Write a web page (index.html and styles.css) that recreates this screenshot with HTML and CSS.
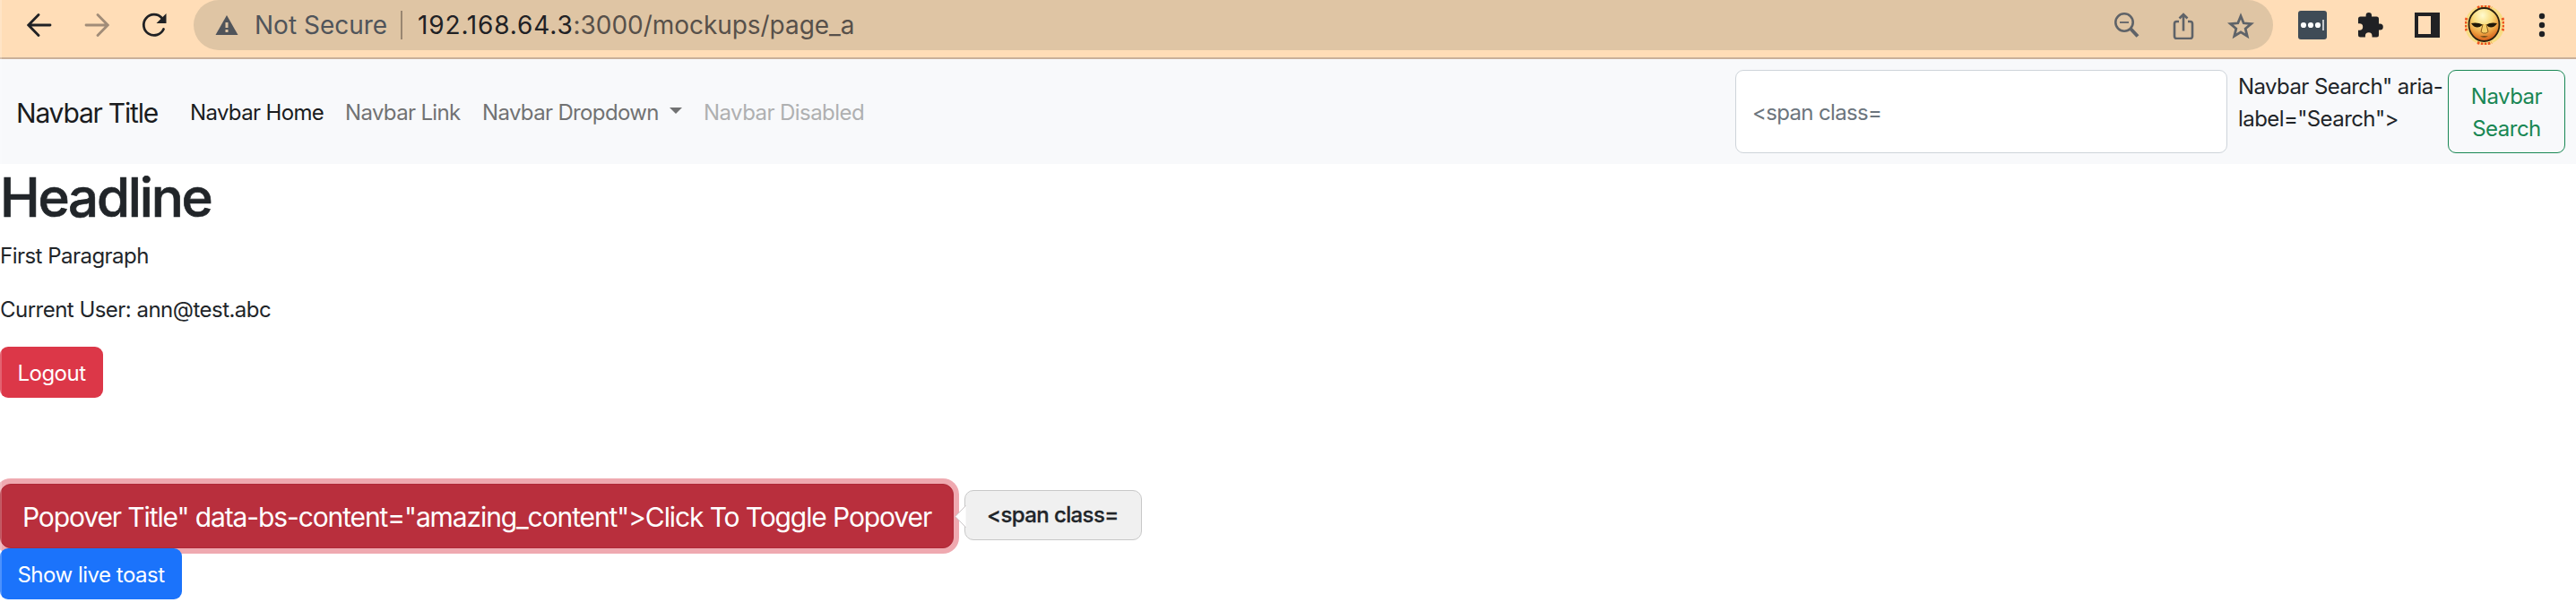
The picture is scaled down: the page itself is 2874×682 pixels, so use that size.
FILE: index.html
```html
<!DOCTYPE html>
<html lang="en">
<head>
<meta charset="utf-8">
<title>Page A</title>
<link rel="stylesheet" href="styles.css">
</head>
<body>
<header class="toolbar">
  <div class="controls">
    <svg width="28" height="28" viewBox="0 0 28 28" class="stroke"><path d="M26 14H3M13 2.500L1.800 14L13 25.500"/></svg>
    <svg width="28" height="28" viewBox="0 0 28 28" class="stroke faded"><path d="M2 14h23M15 2.500L26.200 14L15 25.500"/></svg>
    <svg width="28" height="28" viewBox="0 0 28 28" class="stroke"><path d="M24.500 18.500A11.600 11.600 0 1 1 22.500 6"/><path class="solid" d="M27.500 1v11h-11z"/></svg>
  </div>
  <div class="address">
    <svg width="26" height="24" viewBox="0 0 26 24" class="warn"><path d="M13 1L25.500 23H.5z"/><path class="mark" d="M11.500 9h3v6h-3zM11.500 17h3v3h-3z"/></svg>
    <span class="insecure">Not Secure</span>
    <span class="divider"></span>
    <span class="url"><b class="host">192.168.64.3</b><span class="path">:3000/mockups/page_a</span></span>
    <div class="address-icons">
      <svg width="30" height="32" viewBox="0 0 30 32"><circle cx="13" cy="13" r="9.700"/><path d="M8 13h10" stroke-width="1.800"/><path d="M20 20l8 8.500" stroke-width="4"/></svg>
      <svg width="24" height="32" viewBox="0 0 24 32"><path d="M7 12H4.500a2.500 2.500 0 0 0-2.500 2.500v14A2.500 2.500 0 0 0 4.500 31h15a2.500 2.500 0 0 0 2.500-2.500v-14a2.500 2.500 0 0 0-2.500-2.500H17M12 22.500V4M7.500 8.500L12 4L16.500 8.500"/></svg>
      <svg width="30" height="32" viewBox="0 0 30 32"><path stroke-width="2.800" d="M15 6L18.200 13.800L26.600 14.500L20.200 20L22.200 28.300L15 23.800L7.800 28.300L9.800 20L3.400 14.500L11.800 13.800z"/></svg>
    </div>
  </div>
  <div class="extensions">
    <svg width="32" height="32" viewBox="0 0 32 32"><rect width="32" height="32" rx="3" fill="#3f4b56"/><g fill="#fff"><circle cx="6" cy="16" r="3.100"/><circle cx="14" cy="16" r="3.100"/><circle cx="22" cy="16" r="3.100"/></g><path d="M27 10h2v12h-2z" fill="#c4c8cb"/></svg>
    <svg width="28" height="30" viewBox="0 0 28 30"><path fill="#202124" d="M2.500 5.500H8.600V4.200a3.200 3.200 0 0 1 6.400 0V5.500h5.500a2.500 2.500 0 0 1 2.500 2.500v5.600h1.300a3.500 3.500 0 0 1 0 7H23V26a2.500 2.500 0 0 1-2.500 2.500H15.500V27a3.800 3.800 0 0 0-7.600 0v1.500H2.500A2.500 2.500 0 0 1 0 26v-5.300h1.500a3.700 3.700 0 0 0 0-7.400H0V8A2.500 2.500 0 0 1 2.500 5.500z"/></svg>
    <svg width="28" height="28" viewBox="0 0 28 28"><path fill="#202124" fill-rule="evenodd" d="M0 0h28v28H0zM4 4v20h14V4z"/></svg>
    <svg width="44" height="44" viewBox="0 0 44 44" class="avatar">
      <defs><radialGradient id="face" cx=".45" cy=".22" r=".8"><stop offset="0" stop-color="#fffbd0"/><stop offset=".4" stop-color="#f9dc7c"/><stop offset=".7" stop-color="#eda040"/><stop offset="1" stop-color="#cf5214"/></radialGradient></defs>
      <circle cx="22" cy="22" r="22" fill="#f8dc84"/>
      <g fill="none" stroke="#ee5522" stroke-width="3" stroke-dasharray="2.500 1.500"><path d="M14 2.500q8-3 16 0M14 41.500q8 3 16 0M2 14q-2.500 8 0 15M42 14q2.500 8 0 15"/></g>
      <ellipse cx="21.500" cy="21.500" rx="17" ry="18.500" fill="url(#face)" stroke="#29200f" stroke-width="1.800"/>
      <path d="M7 20q7-1.500 13 1.500q-3 3-6 3q-4 0-7-4.500zM36 20q-7-1.500-12 1.500q2 3 5 3q4 0 7-4.500z" fill="#201808"/>
      <path d="M20 21l-2 8.500 2.500 1.500h3l2.500-1.500-2-8.500" fill="#f6cf68" stroke="#8a5a1a" stroke-width="1"/>
      <path d="M17 34.500q5-1 9 0q-4.500 2.500-9 0z" fill="#6e4a18"/>
    </svg>
    <svg width="8" height="28" viewBox="0 0 8 28" fill="#202124"><circle cx="4" cy="4" r="3.200"/><circle cx="4" cy="14" r="3.200"/><circle cx="4" cy="24" r="3.200"/></svg>
  </div>
</header>
<nav class="navbar">
  <a class="brand">Navbar Title</a>
  <a class="link home">Navbar Home</a>
  <a class="link plain">Navbar Link</a>
  <a class="link dropdown">Navbar Dropdown<i class="caret"></i></a>
  <a class="link disabled">Navbar Disabled</a>
  <form class="search">
    <div class="field">&lt;span class=</div>
    <div class="stray">Navbar Search" aria-<br>label="Search"&gt;</div>
    <button type="button" class="btn outline">Navbar<br>Search</button>
  </form>
</nav>
<main class="content">
  <h1>Headline</h1>
  <p>First Paragraph</p>
  <p>Current User: ann@test.abc</p>
  <button type="button" class="btn danger">Logout</button>
  <div class="popover-row">
    <button type="button" class="btn large">Popover Title" data-bs-content="amazing_content"&gt;Click To Toggle Popover</button>
    <div class="popover"><svg class="arrow" width="13" height="25" viewBox="0 0 13 25"><path d="M12.500 .5L.8 12.500L12.500 24.500" fill="#fff" stroke="#c9c4c5"/></svg>&lt;span class=</div>
  </div>
  <button type="button" class="btn primary">Show live toast</button>
</main>
</body>
</html>
```
FILE: styles.css
```css
* { box-sizing: border-box; }
body { margin: 0; background: #fff; color: #212529; font: 24px/36px Inter, "Liberation Sans", sans-serif; }
body::before { content: ""; position: absolute; left: 0; top: 0; width: 2px; height: 682px; background: rgba(255, 255, 255, .22); z-index: 5; }
svg { display: block; flex: none; }
.toolbar { height: 66px; display: flex; align-items: flex-start; background: #ffddb7; border-bottom: 2px solid #c9b09a; }
.controls { width: 216px; height: 56px; padding-left: 30px; display: flex; align-items: center; gap: 36px; }
.stroke { fill: none; stroke: #202124; stroke-width: 2.8; stroke-linecap: round; }
.faded { stroke: #a18c78; }
.solid { fill: #202124; stroke: none; }
.address { width: 2320px; height: 56px; padding: 0 21px 0 24px; display: flex; align-items: center; background: #dfc5a4; border-radius: 28px; font-size: 28px; white-space: nowrap; }
.warn { fill: #50545a; }
.mark { fill: #dfc5a4; }
.insecure { width: 181px; padding-left: 18px; color: #50545a; }
.divider { width: 2px; height: 32px; background: #998671; }
.url { flex: 1; padding-left: 17px; }
.host { font-weight: 400; color: #202124; letter-spacing: .85px; }
.path { color: #57504a; letter-spacing: -.05px; }
.address-icons { display: flex; align-items: center; gap: 37px; fill: none; stroke: #5f6368; stroke-width: 2.6; stroke-linejoin: miter; }
.extensions { height: 56px; padding-left: 28px; display: flex; align-items: center; gap: 35px; }
.avatar { margin: 0 3px 0 -7px; }
.navbar { height: 117px; padding: 12px 12px 12px 18px; display: flex; align-items: center; background: #f8f9fb; white-space: nowrap; }
.brand { width: 182px; padding-top: 2px; font-size: 30px; letter-spacing: -1.2px; color: #1a1c1e; }
.link { padding: 2px 0 0 12px; color: #717273; letter-spacing: -.65px; }
.home { width: 173px; color: #1a1c1e; }
.plain { width: 153px; }
.dropdown { width: 247px; display: flex; align-items: center; justify-content: space-between; padding-right: 12px; }
.caret { margin-bottom: 4px; border: 7px solid transparent; border-top-color: #717273; border-bottom: 0; }
.disabled { color: #afb0b1; letter-spacing: -.56px; }
.search { height: 93px; margin-left: auto; display: flex; }
.field { width: 549px; margin-right: 12px; padding: 2px 0 0 18px; display: flex; align-items: center; background: #fff; border: 1px solid #ced4da; border-radius: 9px; color: #6c757d; letter-spacing: -.65px; }
.stray { width: 234px; padding-top: 1px; letter-spacing: -.58px; }
.btn { display: block; margin: 0; padding: 2px 0 0; border: 0; border-radius: 9px; font: inherit; letter-spacing: -.5px; color: #fff; text-align: center; white-space: nowrap; }
.outline { width: 131px; border: 1px solid #198754; background: transparent; color: #198754; }
.content { padding-top: 1px; }
h1 { margin: 0 0 12px; font-size: 60px; line-height: 72px; font-weight: 500; letter-spacing: -2.2px; -webkit-text-stroke: .7px #212529; }
p { margin: 0 0 24px; letter-spacing: -.52px; }
.danger { width: 115px; height: 57px; margin-top: -1px; background: #dc3748; }
.popover-row { margin-top: 96px; display: flex; align-items: flex-start; }
.large { width: 1064px; height: 72px; border-radius: 12px; background: #b92f3d; border: 1px solid #ae2937; box-shadow: 0 0 0 6px #efa9b0; font-size: 30px; letter-spacing: -1.11px; }
.popover { position: relative; width: 198px; height: 56px; margin: 7px 0 0 12px; padding-left: 24px; display: flex; align-items: center; background: #f0f0f0; border: 1px solid #c8c8c8; border-radius: 10px; font-weight: 500; letter-spacing: -.6px; -webkit-text-stroke: .3px #212529; }
.arrow { position: absolute; left: -12px; top: 16px; }
.primary { position: relative; width: 203px; height: 57px; background: #1b73fb; }
```
